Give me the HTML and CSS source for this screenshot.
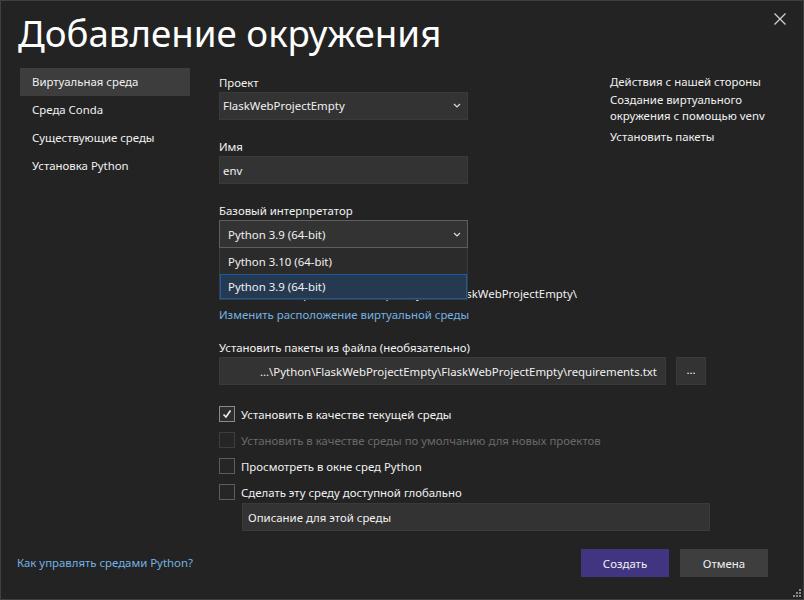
FILE: index.html
```html
<!DOCTYPE html>
<html lang="ru">
<head>
<meta charset="utf-8">
<title>Добавление окружения</title>
<link rel="stylesheet" href="styles.css">
</head>
<body>
<div class="dialog">
  <button class="close" aria-label="Закрыть">
    <svg width="12" height="12" viewBox="0 0 12 12"><path d="M0.5 0.5 L11.5 11.5 M11.5 0.5 L0.5 11.5" stroke="#d0d0d0" stroke-width="1.3" fill="none"/></svg>
  </button>
  <h1 class="title">Добавление окружения</h1>
  <div class="main">
    <nav class="nav">
      <div class="nav-item active">Виртуальная среда</div>
      <div class="nav-item">Среда Conda</div>
      <div class="nav-item">Существующие среды</div>
      <div class="nav-item">Установка Python</div>
    </nav>
    <div class="content">
      <div class="top">
        <div class="fields">
          <div class="group">
            <div class="label">Проект</div>
            <div class="select proj">
              <span>FlaskWebProjectEmpty</span>
              <svg class="chev" width="8" height="5" viewBox="0 0 8 5"><path d="M1 1 L4 4 L7 1" stroke="#dcdcdc" stroke-width="1.2" fill="none"/></svg>
            </div>
          </div>
          <div class="group">
            <div class="label">Имя</div>
            <div class="input">env</div>
          </div>
          <div class="group">
            <div class="label">Базовый интерпретатор</div>
            <div class="combo">
              <div class="select open">
                <span>Python 3.9 (64-bit)</span>
                <svg class="chev" width="8" height="5" viewBox="0 0 8 5"><path d="M1 1 L4 4 L7 1" stroke="#dcdcdc" stroke-width="1.2" fill="none"/></svg>
              </div>
              <div class="popup">
                <div class="opt">Python 3.10 (64-bit)</div>
                <div class="opt sel">Python 3.9 (64-bit)</div>
              </div>
            </div>
          </div>
        </div>
        <aside class="aside">
          <div class="aside-head">Действия с нашей стороны</div>
          <p class="aside-p">Создание виртуального<br>окружения с помощью venv</p>
          <p class="aside-p">Установить пакеты</p>
        </aside>
      </div>
      <div class="group loc">
        <div class="label-spacer"></div>
        <div class="path">C:\Users\developers\Source\Repos\Python\FlaskWebProjectEmpty\</div>
        <a class="link" href="#">Изменить расположение виртуальной среды</a>
      </div>
      <div class="group req">
        <div class="label">Установить пакеты из файла (необязательно)</div>
        <div class="row">
          <div class="input wide">...\Python\FlaskWebProjectEmpty\FlaskWebProjectEmpty\requirements.txt</div>
          <button class="browse">...</button>
        </div>
      </div>
      <div class="checks">
        <div class="check"><span class="box checked"><svg width="12" height="12" viewBox="0 0 12 12"><path d="M2.5 6.5 L5 9 L9.5 2.5" stroke="#f0f0f0" stroke-width="1.6" fill="none"/></svg></span><span>Установить в качестве текущей среды</span></div>
        <div class="check disabled"><span class="box"></span><span>Установить в качестве среды по умолчанию для новых проектов</span></div>
        <div class="check"><span class="box"></span><span>Просмотреть в окне сред Python</span></div>
        <div class="check"><span class="box"></span><span>Сделать эту среду доступной глобально</span></div>
        <div class="input desc">Описание для этой среды</div>
      </div>
    </div>
  </div>
  <div class="footer">
    <a class="link help" href="#">Как управлять средами Python?</a>
    <button class="btn primary">Создать</button>
    <button class="btn">Отмена</button>
  </div>
  <svg class="grip" width="8" height="8" viewBox="0 0 8 8" fill="#8a8a8a">
    <rect x="6" y="0" width="2" height="2"/>
    <rect x="3" y="3" width="2" height="2"/><rect x="6" y="3" width="2" height="2"/>
    <rect x="0" y="6" width="2" height="2"/><rect x="3" y="6" width="2" height="2"/><rect x="6" y="6" width="2" height="2"/>
  </svg>
</div>
</body>
</html>
```

FILE: styles.css
```css
html, body {
  margin: 0;
  padding: 0;
  background: #232323;
}
body {
  font-family: "Noto Sans", "Open Sans", sans-serif;
  font-size: 11.4px;
  color: #f1f1f1;
}
.dialog {
  width: 804px;
  height: 600px;
  box-sizing: border-box;
  border: 1px solid #3f3f3f;
  background: #232323;
  position: relative;
  display: flex;
  flex-direction: column;
}
.close {
  position: absolute;
  top: 12px;
  right: 17px;
  background: none;
  border: 0;
  padding: 0;
  width: 12px;
  height: 12px;
  display: flex;
}
.title {
  margin: 0;
  padding: 7px 0 0 17px;
  font-size: 36.7px;
  font-weight: 400;
  line-height: 50px;
  height: 59px;
  box-sizing: border-box;
  color: #ffffff;
  white-space: nowrap;
}
.main {
  display: flex;
  padding-left: 19px;
  margin-top: 8px;
}
.nav {
  width: 170px;
  flex-shrink: 0;
  margin-right: 29px;
}
.nav-item {
  height: 28px;
  line-height: 27px;
  padding-left: 12px;
  color: #f1f1f1;
}
.nav-item.active {
  background: #3d3d3d;
}
.content {
  width: 580px;
  flex-shrink: 0;
  padding-top: 5px;
}
.top {
  display: flex;
}
.fields {
  width: 249px;
  flex-shrink: 0;
}
.group {
  margin-bottom: 17px;
}
.label {
  line-height: 16px;
  height: 16px;
  padding-top: 2px;
  margin-bottom: 1px;
}
.label-spacer {
  height: 19px;
}
.select, .input {
  height: 28px;
  box-sizing: border-box;
  background: #333333;
  border: 1px solid #3a3a3a;
  display: flex;
  align-items: center;
  padding-left: 3px;
  color: #f1f1f1;
}
.select {
  justify-content: space-between;
  padding-right: 6px;
}
.select.proj {
  padding-bottom: 2px;
}
.select.open {
  border-color: #5e5e5e;
  padding-left: 8px;
}
.combo {
  position: relative;
}
.popup {
  position: absolute;
  left: 0;
  top: 100%;
  width: 249px;
  box-sizing: border-box;
  background: #2b2b2b;
  border: 1px solid #3c3c3c;
  border-top: 0;
  z-index: 5;
}
.opt {
  height: 26px;
  line-height: 27px;
  padding-left: 8px;
  box-sizing: border-box;
}
.opt.sel {
  background: #253a51;
  border: 1px solid #1d5c9c;
  line-height: 24px;
  padding-left: 7px;
  height: 25px;
}
.aside {
  margin-left: 142px;
  width: 180px;
  flex-shrink: 0;
  padding-top: 1px;
}
.aside-head {
  line-height: 16px;
  margin-bottom: 2px;
}
.aside-p {
  margin: 0 0 5px;
  line-height: 16px;
}
.path {
  line-height: 16px;
  margin-top: 2px;
  white-space: nowrap;
}
.link {
  display: block;
  color: #74b2e4;
  text-decoration: none;
  line-height: 16px;
  margin-top: 5px;
}
.group.loc {
  margin-bottom: 15px;
}
.group.req {
  margin-bottom: 17px;
}
.row {
  display: flex;
}
.input.wide {
  width: 447px;
  justify-content: flex-end;
  padding-right: 8px;
  white-space: nowrap;
}
.browse {
  width: 30px;
  height: 28px;
  margin-left: 10px;
  background: #333333;
  border: 1px solid #3a3a3a;
  color: #f1f1f1;
  font-family: inherit;
  font-size: 11.4px;
  padding: 0 0 4px;
}
.check {
  display: flex;
  align-items: center;
  height: 24px;
  margin-bottom: 2px;
}
.box {
  width: 16px;
  height: 16px;
  box-sizing: border-box;
  border: 1px solid #5c5c5c;
  background: #262626;
  margin-right: 6px;
  display: flex;
  align-items: center;
  justify-content: center;
}
.box.checked {
  border-color: #8a8a8a;
  background: #2e2e2e;
}
.check.disabled {
  color: #6a6a6a;
}
.check.disabled .box {
  border-color: #3e3e3e;
}
.input.desc {
  margin-left: 23px;
  width: 468px;
  padding-left: 5px;
  margin-top: -3px;
}
.footer {
  margin-top: auto;
  display: flex;
  align-items: center;
  padding: 0 35px 22px 16px;
}
.help {
  margin: 0 auto 0 0;
}
.btn {
  width: 88px;
  height: 28px;
  border: 0;
  background: #3e3e3e;
  color: #f1f1f1;
  font-family: inherit;
  font-size: 11.4px;
  margin-left: 11px;
  padding: 0;
}
.btn.primary {
  background: #413581;
}
.grip {
  position: absolute;
  right: 2px;
  bottom: 2px;
}
```
